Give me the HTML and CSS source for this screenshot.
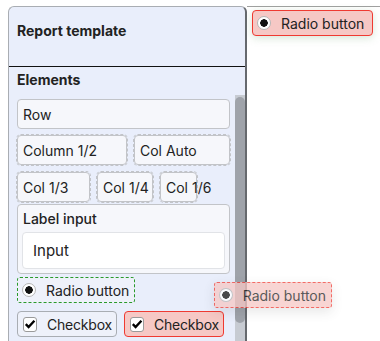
FILE: index.html
```html
<!DOCTYPE html>
<html>
<head>
    <meta charset="utf-8">
    <title>Report template</title>
    <link rel="stylesheet" href="styles.css">
</head>
<body>
<div class="sidebar">
    <div class="header">Report template</div>
    <div class="section-title">Elements</div>
    <div class="list">
        <div class="items">
            <div class="box row">Row</div>
            <div class="line">
                <div class="box col dashed w-half">Column 1/2</div>
                <div class="box col dashed w-auto">Col Auto</div>
            </div>
            <div class="line">
                <div class="box col dashed w-third">Col 1/3</div>
                <div class="box col dashed w-quarter">Col 1/4</div>
                <div class="box col dashed w-sixth">Col 1/6</div>
            </div>
            <div class="box field">
                <div class="field-label">Label input</div>
                <div class="field-input">Input</div>
            </div>
            <div class="radio-line">
                <div class="chip radio dropzone"><span class="dot"></span>Radio button</div>
            </div>
            <div class="line">
                <div class="chip checkbox">
                    <span class="check"><svg width="12" height="12" viewBox="0 0 12 12"><path d="M1.8 6.2 L4.6 9 L10.4 2.8" fill="none" stroke="#000" stroke-width="2.4"/></svg></span>Checkbox
                </div>
                <div class="chip checkbox hot">
                    <span class="check"><svg width="12" height="12" viewBox="0 0 12 12"><path d="M1.8 6.2 L4.6 9 L10.4 2.8" fill="none" stroke="#000" stroke-width="2.4"/></svg></span>Checkbox
                </div>
            </div>
        </div>
        <div class="scrollbar"><div class="thumb"></div></div>
    </div>
</div>
<div class="canvas">
    <div class="chip radio hot float"><span class="dot"></span>Radio button</div>
</div>
<div class="chip radio hot dropzone dragging"><span class="dot"></span>Radio button</div>
</body>
</html>
```

FILE: styles.css
```css
body {
    margin: 0;
    padding: 6px 0 0 8px;
    display: flex;
    height: 341px;
    box-sizing: border-box;
    overflow: hidden;
    font: 14px Inter, "Liberation Sans", sans-serif;
    color: #222;
    background: #fff;
}

.sidebar {
    width: 236px;
    flex: none;
    background: #e9eefb;
    border: 1px solid #a9adb3;
    border-right: 2px solid #66696e;
    border-bottom: none;
    border-radius: 6px 6px 0 0;
    display: flex;
    flex-direction: column;
}

.header {
    box-sizing: border-box;
    height: 60px;
    border-bottom: 1px solid #111;
    padding: 15px 0 0 8px;
    font-size: 14px;
    font-weight: 700;
}

.section-title {
    padding: 4px 8px 0 8px;
    height: 24px;
    font-size: 14px;
    font-weight: 700;
}

.list {
    flex: 1;
    display: flex;
    min-height: 0;
}

.items {
    flex: 1;
    padding: 4px 5px 0 8px;
    display: flex;
    flex-direction: column;
}

.items > * {
    flex-shrink: 0;
}

.scrollbar {
    width: 10px;
    background: #c7cbd2;
    padding-top: 2px;
}

.thumb {
    height: 226px;
    background: #9fa3aa;
    border-radius: 5px;
}

.box {
    box-sizing: border-box;
    height: 30px;
    border: 1px solid #c2c4c8;
    border-radius: 4px;
    background: #f6f7fb;
    padding-left: 5px;
    display: flex;
    align-items: center;
    white-space: nowrap;
}

.row {
    margin-bottom: 6px;
}

.dashed {
    outline: 1px dashed #c2c4c8;
}

.line {
    display: flex;
    gap: 7px;
    margin-bottom: 7px;
}

.w-half { width: 110px; }
.w-auto { width: 96px; }
.w-third { width: 73px; }
.w-quarter { width: 56px; }
.w-sixth { width: 37px; }

.field {
    height: 70px;
    margin-top: -5px;
    flex-direction: column;
    align-items: stretch;
    padding: 4px;
}

.field-label {
    font-size: 14px;
    font-weight: 500;
    padding: 1px 0 0 1px;
    height: 22px;
}

.field-input {
    flex: 1;
    background: #fff;
    border: 1px solid #e1e3e7;
    border-radius: 4px;
    padding-left: 10px;
    font-size: 15px;
    display: flex;
    align-items: center;
}

.radio-line {
    display: flex;
    margin: 3px 0 8px 0;
}

.chip {
    box-sizing: border-box;
    height: 26px;
    display: flex;
    align-items: center;
    gap: 10px;
    padding: 0 5px;
    border: 1px solid #a9adb3;
    border-radius: 4px;
    background: #eef1fa;
    white-space: nowrap;
}

.chip.checkbox {
    width: 100px;
    letter-spacing: -0.2px;
}

.chip.radio {
    padding-left: 4px;
    gap: 10px;
}

.dropzone {
    border: 1px dashed #2a9a2a;
    border-radius: 3px;
}

.hot {
    background: #f6c8c5;
    border-color: #ef3a32;
}

.dot {
    width: 14px;
    height: 14px;
    box-sizing: border-box;
    border: 1px solid #b5b5b5;
    border-radius: 50%;
    background: #fff radial-gradient(circle, #111 0 3.5px, transparent 4px);
}

.check {
    width: 15px;
    height: 15px;
    box-sizing: border-box;
    border: 1px solid #9a9a9a;
    border-radius: 3px;
    background: #fff;
    display: flex;
    align-items: center;
    justify-content: center;
}

.canvas {
    flex: 1;
    border-top: 1px solid #a0a0a0;
    padding: 3px 0 0 5px;
    height: 40px;
}

.float {
    box-shadow: 0 2px 8px rgba(120, 170, 120, 0.3);
    display: inline-flex;
    width: 121px;
}

.dragging {
    position: absolute;
    left: 214px;
    top: 282px;
    width: 118px;
    opacity: 0.75;
    box-shadow: 0 4px 12px rgba(0, 0, 0, 0.12);
}
```
